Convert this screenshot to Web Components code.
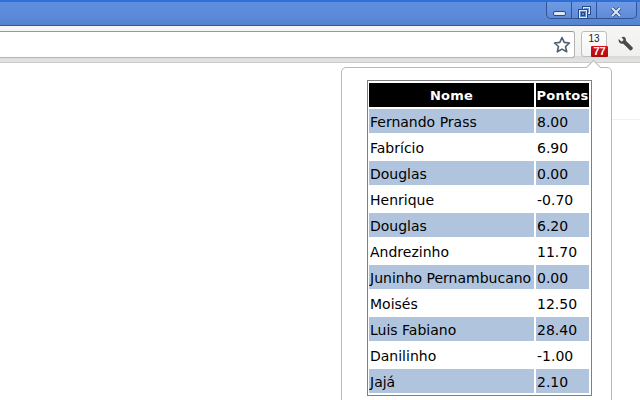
<!DOCTYPE html>
<html><head><meta charset="utf-8"><title>Pontos</title>
<style>html,body{margin:0;height:400px;overflow:hidden;background:#fff}</style></head>
<body>
<browser-window></browser-window>
<script>
class ChromeTitlebar extends HTMLElement{constructor(){super();this.attachShadow({mode:'open'}).innerHTML=`<style>
:host{display:flex;justify-content:flex-end;height:26px;box-sizing:border-box;background:linear-gradient(#5f8ee0,#5c8ad8 60%,#5683cf);border-top:2px solid #2f6fd8;border-bottom:1px solid #35599c;}
.ctl{display:flex;height:16px;margin-right:3px;border:1px solid #2f5597;border-top:0;border-radius:0 0 5px 5px;background:linear-gradient(#6f9ae3,#5f8ad6);}
.b{height:16px;display:flex;align-items:center;justify-content:center;border-right:1px solid #2f5597}
.b:last-child{border-right:0}
svg{display:block}
</style><div class="ctl">
<div class="b" style="width:24px"><svg width="13" height="6" style="margin-top:8px"><rect x=".5" y=".5" width="12" height="4" rx="1.5" fill="#dfe8f6" stroke="#244a8a"/></svg></div>
<div class="b" style="width:24px"><svg width="13" height="13" fill="none" stroke="#dfe8f6" style="margin-top:5px"><rect x="4.500" y=".5" width="8" height="8" stroke="#244a8a"/><rect x="5.500" y="1.500" width="6" height="6"/><rect x=".5" y="3.500" width="9" height="9" fill="#5f8ad6" stroke="#244a8a"/><rect x="1.500" y="4.500" width="7" height="7"/><rect x="3.500" y="6.500" width="3" height="3" stroke="#244a8a"/></svg></div>
<div class="b" style="width:39px"><svg width="12" height="10" style="margin:4px 1px 0 0"><path d="M2 1l8 8M10 1l-8 8" stroke="#244a8a" stroke-width="3.400"/><path d="M2 1l8 8M10 1l-8 8" stroke="#e6edf8" stroke-width="1.800"/></svg></div>
</div>`}}
customElements.define('chrome-titlebar',ChromeTitlebar);

class ChromeToolbar extends HTMLElement{constructor(){super();this.attachShadow({mode:'open'}).innerHTML=`<style>
:host{display:flex;align-items:flex-start;height:37px;box-sizing:border-box;padding-top:5px;background:linear-gradient(#f6f6f5,#f0f0ef 82%,#d9d9d9 85%,#e2e2e2 95%);border-bottom:1px solid #c9c9c9;font-family:"Liberation Sans",sans-serif}
.omni{flex:1;height:27px;box-sizing:border-box;background:#fff;border:1px solid #b4b4b4;border-left:0;border-radius:0 3px 3px 0;border-top-color:#999;display:flex;align-items:center;justify-content:flex-end;padding-right:3px;margin-right:6px}
.ext{width:26px;height:26px;flex:none;box-sizing:border-box;margin-top:0;border:1px solid #bdbdbd;border-radius:3px;background:linear-gradient(#fff,#f3f3f3);position:relative;font-size:10px;color:#222;text-align:center;line-height:14px;z-index:2}
.badge{position:absolute;left:9px;top:14px;width:17px;height:11px;background:linear-gradient(#d8141c,#a80c10);border-radius:1px;color:#fff;font:bold 11px/11px "Liberation Sans",sans-serif;text-align:center}
.wrench{margin:4px 6px 0 10px;display:block;flex:none}
</style><div class="omni"><svg width="18" height="18" viewBox="0 0 18 18"><path d="M9 1.500l2.200 4.900 5.300.6-4 3.500 1.200 5.300L9 13.100l-4.700 2.700 1.200-5.300-4-3.500 5.300-.6z" fill="#fff" stroke="#4f5f70" stroke-width="1.600" stroke-linejoin="round"/></svg></div>
<div class="ext"><slot name="count"></slot><div class="badge"><slot name="badge"></slot></div></div>
<svg class="wrench" width="17" height="17" viewBox="0 0 19 19"><path d="M2 4.500L5 7.500 7.500 5.500 5 2.500C7.500 1 10 2.500 10 5.500L10 6.500 17.500 14C18.500 15.500 16 18 14.500 17L7 9.800C4 10.500 1 8 2 4.500Z" fill="#4a4a4a"/></svg>`}}
customElements.define('chrome-toolbar',ChromeToolbar);

class ScoreTable extends HTMLElement{constructor(){super();const rows=[['Fernando Prass','8.00'],['Fabrício','6.90'],['Douglas','0.00'],['Henrique','-0.70'],['Douglas','6.20'],['Andrezinho','11.70'],['Juninho Pernambucano','0.00'],['Moisés','12.50'],['Luis Fabiano','28.40'],['Danilinho','-1.00'],['Jajá','2.10']];
this.attachShadow({mode:'open'}).innerHTML=`<style>
:host{display:block;width:225px;box-sizing:border-box;border:1px solid #808080;overflow:hidden;font:14px/24px "DejaVu Sans",Verdana,sans-serif;color:#000}
table{border-collapse:separate;border-spacing:2px;width:224px;margin-left:-1px;table-layout:fixed}
th{background:#000;color:#fff;font-weight:bold;font-size:13px;letter-spacing:.2px;height:22px;padding:2px 0 0;line-height:22px;white-space:nowrap}
td{height:22px;padding:2px 0 0 1px;white-space:nowrap;overflow:hidden;line-height:22px}
tr:nth-child(even) td{background:#b0c4de}
th:first-child{width:165px}
</style><table><tr><th>Nome</th><th>Pontos</th></tr>${rows.map(r=>`<tr><td>${r[0]}</td><td>${r[1]}</td></tr>`).join('')}</table>`}}
customElements.define('score-table',ScoreTable);

class ExtPopup extends HTMLElement{constructor(){super();this.attachShadow({mode:'open'}).innerHTML=`<style>
:host{position:absolute;left:341px;top:67px;width:271px;height:360px;box-sizing:border-box;background:#fff;border:1px solid #b8b8b8;border-radius:5px;padding:12px 0 0 25px}
.tip{position:absolute;left:246px;top:-6px;width:10px;height:10px;background:#fff;border:1px solid #b8b8b8;border-right:0;border-bottom:0;transform:rotate(45deg)}
</style><div class="tip"></div><slot></slot>`}}
customElements.define('ext-popup',ExtPopup);

class BrowserWindow extends HTMLElement{constructor(){super();this.attachShadow({mode:'open'}).innerHTML=`<style>
:host{display:block;position:relative;height:400px;overflow:hidden;background:#fff}
.line{height:1px;background:#f0f0f0;margin:56px 0 0 612px}
</style><chrome-titlebar></chrome-titlebar><chrome-toolbar><span slot="count">13</span><span slot="badge">77</span></chrome-toolbar><div class="line"></div><ext-popup><score-table></score-table></ext-popup>`}}
customElements.define('browser-window',BrowserWindow);
</script></body></html>
